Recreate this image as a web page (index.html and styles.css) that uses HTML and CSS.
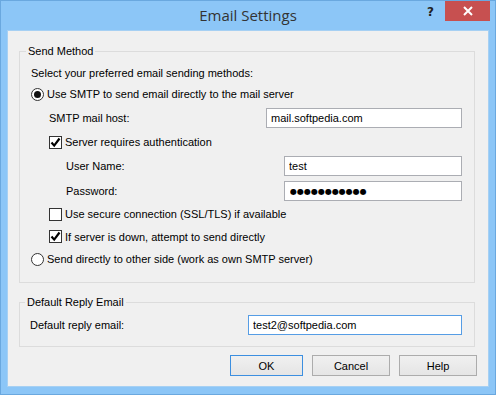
FILE: index.html
```html
<!DOCTYPE html>
<html lang="en">
  <head>
    <meta charset="UTF-8" />
    <title>Email Settings</title>
    <link rel="stylesheet" href="styles.css">
  </head>

  <body>
    <div class="window">
      <div class="titlebar">
        <span class="title">Email Settings</span>
        <span class="help-btn">?</span>
        <span class="close-btn">
          <svg width="12" height="10" viewBox="0 0 12 10">
            <path d="M2 1 L10 9 M10 1 L2 9" stroke="#fff" stroke-width="2" />
          </svg>
        </span>
      </div>

      <div class="client">
        <fieldset class="group send-group">
          <legend>Send Method</legend>
          <div class="rows">
            <div class="row">Select your preferred email sending methods:</div>
            <div class="row">
              <span class="radio checked"></span>
              <span>Use SMTP to send email directly to the mail server</span>
            </div>
            <div class="row indent-1 field-row">
              <span class="label">SMTP mail host:</span>
              <input class="field host-field" type="text" value="mail.softpedia.com" />
            </div>
            <div class="row indent-1">
              <span class="check checked">
                <svg width="11" height="11" viewBox="0 0 11 11">
                  <path d="M1.5 5.5 L4.2 8.6 L9.5 1.5" fill="none" stroke="#000" stroke-width="2.2" />
                </svg>
              </span>
              <span>Server requires authentication</span>
            </div>
            <div class="row indent-2 field-row">
              <span class="label">User Name:</span>
              <input class="field auth-field" type="text" value="test" />
            </div>
            <div class="row indent-2 field-row">
              <span class="label">Password:</span>
              <input class="field auth-field dots" type="text" value="●●●●●●●●●●●" />
            </div>
            <div class="row indent-1">
              <span class="check"></span>
              <span>Use secure connection (SSL/TLS) if available</span>
            </div>
            <div class="row indent-1">
              <span class="check checked">
                <svg width="11" height="11" viewBox="0 0 11 11">
                  <path d="M1.5 5.5 L4.2 8.6 L9.5 1.5" fill="none" stroke="#000" stroke-width="2.2" />
                </svg>
              </span>
              <span>If server is down, attempt to send directly</span>
            </div>
            <div class="row">
              <span class="radio"></span>
              <span>Send directly to other side (work as own SMTP server)</span>
            </div>
          </div>
        </fieldset>

        <fieldset class="group reply-group">
          <legend>Default Reply Email</legend>
          <div class="row field-row">
            <span class="label">Default reply email:</span>
            <input class="field reply-field focused" type="text" value="test2@softpedia.com" />
          </div>
        </fieldset>

        <div class="buttons">
          <button class="btn btn-default">OK</button>
          <button class="btn">Cancel</button>
          <button class="btn">Help</button>
        </div>
      </div>
    </div>
  </body>
</html>
```

FILE: styles.css
```css
:root {
  --frame: #8cc6f7;
  --frame-edge: #6aa8df;
  --face: #f0f0f0;
  --group-line: #dcdcdc;
  --field-line: #abadb3;
}
* {
  box-sizing: border-box;
}
body {
  margin: 0;
  width: 496px;
  height: 395px;
  font-family: "Liberation Sans", Arial, sans-serif;
  font-size: 11px;
  color: #000;
}
.window {
  width: 496px;
  height: 395px;
  background: var(--frame);
  border: 1px solid var(--frame-edge);
  display: flex;
  flex-direction: column;
}
.titlebar {
  height: 29px;
  display: flex;
  align-items: flex-start;
  position: relative;
}
.title {
  position: absolute;
  left: 0;
  right: 0;
  top: 4px;
  text-align: center;
  font-family: "Open Sans", "Noto Sans", sans-serif;
  font-size: 15px;
  color: #333;
}
.help-btn {
  position: absolute;
  right: 61px;
  top: 4px;
  font-family: "DejaVu Sans", sans-serif;
  font-weight: bold;
  font-size: 12px;
  color: #222;
}
.close-btn {
  position: absolute;
  right: 5px;
  top: 0;
  width: 45px;
  height: 20px;
  background: #c75050;
  display: flex;
  align-items: center;
  justify-content: center;
}
.client {
  flex: 1;
  margin: 0 6px 7px 6px;
  border: 1px solid #a6d0f3;
  background: var(--face);
  padding: 0 11px 0 11px;
}

/* group boxes */
.group {
  margin: 13px 0 0 0;
  border: 1px solid var(--group-line);
  border-radius: 0;
  padding: 4px 12px 0 11px;
  min-width: 0;
}
.group legend {
  padding: 0 2px;
  margin-left: -5px;
  line-height: 14px;
}
.send-group {
  height: 239px;
  margin-right: 2px;
}
.reply-group {
  height: 52px;
  margin-top: 12px;
  margin-right: 2px;
  padding-left: 10px;
}
.rows {
  display: grid;
  grid-template-rows: 21px 22px 26px 22px 26px 24px 22px 23px 22px;
}
.row {
  display: flex;
  align-items: center;
  white-space: nowrap;
}
.reply-group .row {
  height: 24px;
}
.indent-1 {
  padding-left: 18px;
}
.indent-2 {
  padding-left: 35px;
}
.field-row .label {
  flex: 1;
}

/* inputs */
.field {
  height: 20px;
  border: 1px solid var(--field-line);
  background: #fff;
  padding: 0 4px;
  font: inherit;
  color: #000;
  outline: none;
}
.host-field {
  width: 196px;
}
.auth-field {
  width: 178px;
}
.reply-field {
  width: 214px;
}
.focused {
  border-color: #569de5;
}
.dots {
  font-family: "DejaVu Sans", sans-serif;
  font-size: 8px;
  padding-left: 5px;
}

/* radio and check */
.radio {
  width: 13px;
  height: 13px;
  border: 1px solid #333;
  border-radius: 50%;
  background: #fff;
  margin-right: 3px;
  display: flex;
  align-items: center;
  justify-content: center;
}
.radio.checked::after {
  content: "";
  width: 7px;
  height: 7px;
  border-radius: 50%;
  background: #111;
}
.check {
  width: 13px;
  height: 13px;
  border: 1px solid #333;
  background: #fff;
  margin-right: 3px;
  display: flex;
  align-items: center;
  justify-content: center;
}

/* buttons */
.buttons {
  display: flex;
  justify-content: flex-end;
  gap: 9px;
  margin-top: 8px;
}
.btn {
  width: 78px;
  height: 21px;
  border: 1px solid #acacac;
  background: linear-gradient(#f0f0f0, #e5e5e5);
  font: inherit;
  color: #000;
  padding: 0;
}
.btn-default {
  width: 73px;
  border-color: #3c8fe0;
}
```
